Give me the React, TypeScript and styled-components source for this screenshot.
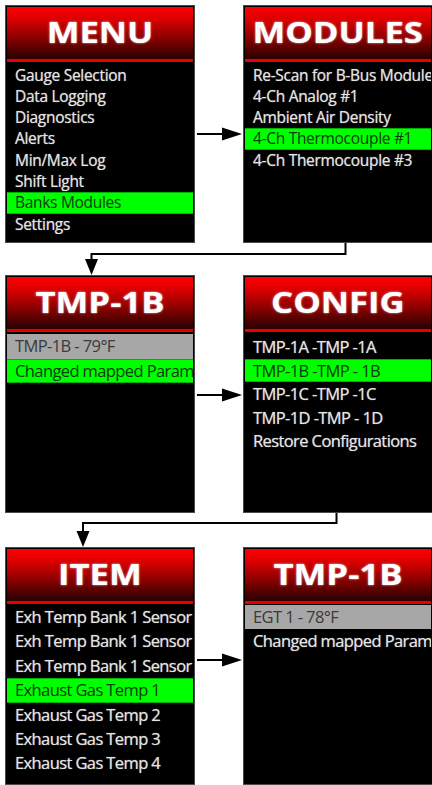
import React from 'react'
import styled, { createGlobalStyle } from 'styled-components'

const GlobalStyle = createGlobalStyle`
  html, body {
    margin: 0;
    padding: 0;
    background: #ffffff;
    overflow: hidden;
  }
  body {
    font-family: "Open Sans", "Liberation Sans", sans-serif;
  }
`

type Tone = 'green' | 'gray'
type Item = { label: string; tone?: Tone }

type ScreenData = {
  title: string
  rowHeight: number
  fontSize: number
  tracking: number
  listTop: number
  items: Item[]
}

const screens: ScreenData[][] = [
  [
    {
      title: 'MENU',
      rowHeight: 21.3,
      fontSize: 15.5,
      tracking: -0.3,
      listTop: 2.5,
      items: [
        { label: 'Gauge Selection' },
        { label: 'Data Logging' },
        { label: 'Diagnostics' },
        { label: 'Alerts' },
        { label: 'Min/Max Log' },
        { label: 'Shift Light' },
        { label: 'Banks Modules', tone: 'green' },
        { label: 'Settings' }
      ]
    },
    {
      title: 'MODULES',
      rowHeight: 21.3,
      fontSize: 15.5,
      tracking: -0.3,
      listTop: 2.5,
      items: [
        { label: 'Re-Scan for B-Bus Modules' },
        { label: '4-Ch Analog #1' },
        { label: 'Ambient Air Density' },
        { label: '4-Ch Thermocouple #1', tone: 'green' },
        { label: '4-Ch Thermocouple #3' }
      ]
    }
  ],
  [
    {
      title: 'TMP-1B',
      rowHeight: 24.5,
      fontSize: 16.5,
      tracking: -0.6,
      listTop: 2,
      items: [
        { label: 'TMP-1B - 79°F', tone: 'gray' },
        { label: 'Changed mapped Param', tone: 'green' }
      ]
    },
    {
      title: 'CONFIG',
      rowHeight: 23.6,
      fontSize: 16.5,
      tracking: -0.6,
      listTop: 3,
      items: [
        { label: 'TMP-1A -TMP -1A' },
        { label: 'TMP-1B -TMP - 1B', tone: 'green' },
        { label: 'TMP-1C -TMP -1C' },
        { label: 'TMP-1D -TMP - 1D' },
        { label: 'Restore Configurations' }
      ]
    }
  ],
  [
    {
      title: 'ITEM',
      rowHeight: 24.4,
      fontSize: 16.5,
      tracking: -0.6,
      listTop: 1,
      items: [
        { label: 'Exh Temp Bank 1 Sensor' },
        { label: 'Exh Temp Bank 1 Sensor' },
        { label: 'Exh Temp Bank 1 Sensor' },
        { label: 'Exhaust Gas Temp 1', tone: 'green' },
        { label: 'Exhaust Gas Temp 2' },
        { label: 'Exhaust Gas Temp 3' },
        { label: 'Exhaust Gas Temp 4' }
      ]
    },
    {
      title: 'TMP-1B',
      rowHeight: 24.4,
      fontSize: 16.5,
      tracking: -0.6,
      listTop: 1,
      items: [
        { label: 'EGT 1 - 78°F', tone: 'gray' },
        { label: 'Changed mapped Param' }
      ]
    }
  ]
]

// where the horizontal arrow sits, measured from the top of each row
const arrowOffsets = [129, 120, 113]

const Screen = ({ data }: { data: ScreenData }) => (
  <Frame>
    <Header>
      <Title>{data.title}</Title>
    </Header>
    <List $top={data.listTop}>
      {data.items.map((item, i) => (
        <Row key={i} $tone={item.tone} $h={data.rowHeight} $size={data.fontSize} $tracking={data.tracking}>
          {item.label}
        </Row>
      ))}
    </List>
  </Frame>
)

const SideArrow = ({ offset }: { offset: number }) => (
  <ArrowCell $offset={offset}>
    <svg width="48" height="14" viewBox="0 0 48 14">
      <line x1="2" y1="7" x2="30" y2="7" stroke="#000" strokeWidth="2" />
      <polygon points="27,0.5 47,7 27,13.5" fill="#000" />
    </svg>
  </ArrowCell>
)

const Elbow = ({ height, fromX, toX, bendY }: { height: number; fromX: number; toX: number; bendY: number }) => (
  <Connector $h={height}>
    <svg width="432" height={height} viewBox={`0 0 432 ${height}`}>
      <polyline
        points={`${fromX},0 ${fromX},${bendY} ${toX},${bendY} ${toX},${height - 14}`}
        fill="none"
        stroke="#000"
        strokeWidth="2"
      />
      <polygon points={`${toX - 6.5},${height - 16} ${toX + 6.5},${height - 16} ${toX},${height}`} fill="#000" />
    </svg>
  </Connector>
)

const App = () => {
  return (
    <Page>
      <GlobalStyle />
      <Grid>
        <Screen data={screens[0][0]} />
        <SideArrow offset={arrowOffsets[0]} />
        <Screen data={screens[0][1]} />
      </Grid>
      <Elbow height={32} fromX={345.5} toX={91.5} bendY={11} />
      <Grid>
        <Screen data={screens[1][0]} />
        <SideArrow offset={arrowOffsets[1]} />
        <Screen data={screens[1][1]} />
      </Grid>
      <Elbow height={34} fromX={336.5} toX={83} bendY={10} />
      <Grid>
        <Screen data={screens[2][0]} />
        <SideArrow offset={arrowOffsets[2]} />
        <Screen data={screens[2][1]} />
      </Grid>
    </Page>
  )
}

const Page = styled.div`
  width: 432px;
  height: 785px;
  padding-top: 5px;
  box-sizing: border-box;
  overflow: hidden;
  background: #fff;
`

const Grid = styled.div`
  display: grid;
  grid-template-columns: 190px 48px 190px;
  padding-left: 5px;
  height: 238px;
`

const Frame = styled.div`
  box-sizing: border-box;
  height: 238px;
  border: 1px solid #4a4a4a;
  padding: 1px;
  background: #000;
  display: flex;
  flex-direction: column;
  overflow: hidden;
`

const Header = styled.div`
  height: 52px;
  flex-shrink: 0;
  display: flex;
  align-items: center;
  justify-content: center;
  background: linear-gradient(to bottom, #ff0000 0%, #d80000 25%, #8a0000 60%, #3a0000 92%, #2a0000 100%);
  border-bottom: 3px solid #e80000;
`

const Title = styled.div`
  color: #fff;
  font-family: "Open Sans", "Liberation Sans", sans-serif;
  font-weight: 700;
  font-size: 28px;
  line-height: 1;
  transform: scaleX(1.24);
  text-shadow: 0 0 2px rgba(255, 255, 255, 0.8);
  margin-top: -3px;
  white-space: nowrap;
`

const List = styled.div<{ $top: number }>`
  display: flex;
  flex-direction: column;
  padding-top: ${(p) => p.$top}px;
`

const Row = styled.div<{ $tone?: Tone; $h: number; $size: number; $tracking: number }>`
  height: ${(p) => p.$h}px;
  line-height: ${(p) => (p.$tone === 'green' ? p.$h - 2 : p.$h)}px;
  font-size: ${(p) => p.$size}px;
  letter-spacing: ${(p) => p.$tracking}px;
  padding-left: 8px;
  white-space: nowrap;
  overflow: hidden;
  box-sizing: border-box;
  color: ${(p) => (p.$tone === 'green' ? '#0b3a0b' : p.$tone === 'gray' ? '#3a3a3a' : '#e4e4e4')};
  background: ${(p) => (p.$tone === 'green' ? '#00ff00' : p.$tone === 'gray' ? '#a7a7a7' : 'transparent')};
  border-top: ${(p) => (p.$tone === 'green' ? '1px solid #00b000' : 'none')};
  border-bottom: ${(p) => (p.$tone === 'green' ? '1px solid #00b000' : 'none')};
  text-shadow: ${(p) => (p.$tone ? 'none' : '0 0 1px rgba(255,255,255,0.6)')};
`

const ArrowCell = styled.div<{ $offset: number }>`
  box-sizing: border-box;
  padding-top: ${(p) => p.$offset - 7}px;
  svg {
    display: block;
  }
`

const Connector = styled.div<{ $h: number }>`
  height: ${(p) => p.$h}px;
  svg {
    display: block;
  }
`

export default App
